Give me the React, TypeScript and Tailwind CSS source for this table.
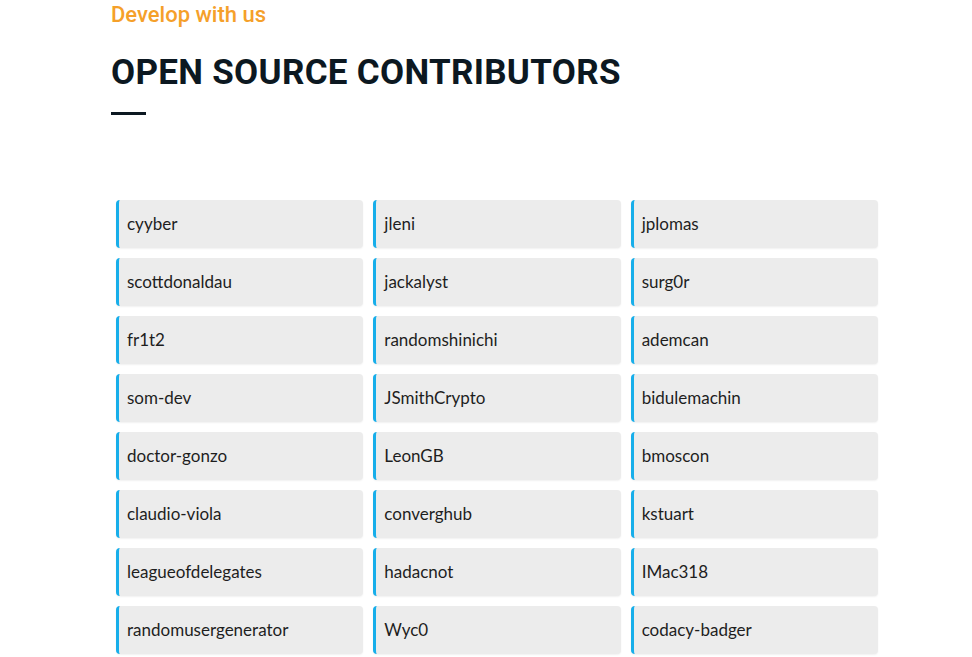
import React from "react";

const contributors = [
  "cyyber",
  "jleni",
  "jplomas",
  "scottdonaldau",
  "jackalyst",
  "surg0r",
  "fr1t2",
  "randomshinichi",
  "ademcan",
  "som-dev",
  "JSmithCrypto",
  "bidulemachin",
  "doctor-gonzo",
  "LeonGB",
  "bmoscon",
  "claudio-viola",
  "converghub",
  "kstuart",
  "leagueofdelegates",
  "hadacnot",
  "IMac318",
  "randomusergenerator",
  "Wyc0",
  "codacy-badger",
];

const ContributorCard = ({ name }: { name: string }) => (
  <div className="m-[5px] h-[48px] flex items-center pl-[8px] bg-[#ececec] border-l-[3px] border-[#17aeea] rounded-[4px] shadow-[0_1px_2px_rgba(0,0,0,0.06)]">
    <span className="text-[17px] text-[#1e1e1e] font-['Lato',sans-serif]">
      {name}
    </span>
  </div>
);

export default function App() {
  return (
    <div className="w-[972px] h-[657px] overflow-hidden bg-white">
      <div className="ml-[111px] w-[772px]">
        <p className="pt-[1px] text-[22px] leading-[28px] font-medium text-[#f5a02a] font-['Roboto',sans-serif]">
          Develop with us
        </p>
        <h1 className="mt-[22px] text-[35px] leading-[44px] font-bold tracking-[0.3px] text-[#0c1821] font-['Roboto',sans-serif]">
          OPEN SOURCE CONTRIBUTORS
        </h1>
        <div className="mt-[17px] w-[35px] h-[3px] bg-[#0c1821]" />
        <div className="mt-[80px] grid grid-cols-3">
          {contributors.map((c) => (
            <ContributorCard key={c} name={c} />
          ))}
        </div>
      </div>
    </div>
  );
}
